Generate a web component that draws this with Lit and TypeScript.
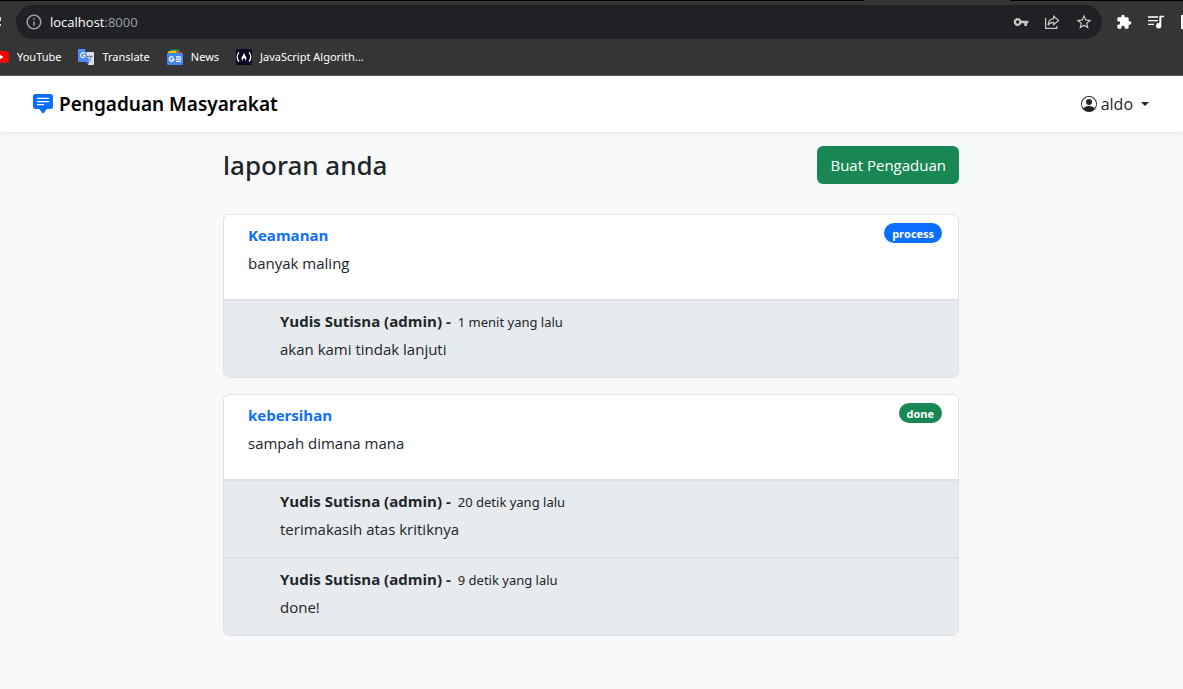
import { LitElement, html, css, svg } from "lit";
import { customElement, property } from "lit/decorators.js";

interface Reply {
  author: string;
  time: string;
  text: string;
}

interface Report {
  title: string;
  text: string;
  status: "process" | "done";
  replies: Reply[];
}

const reports: Report[] = [
  {
    title: "Keamanan",
    text: "banyak maling",
    status: "process",
    replies: [
      { author: "Yudis Sutisna (admin)", time: "1 menit yang lalu", text: "akan kami tindak lanjuti" },
    ],
  },
  {
    title: "kebersihan",
    text: "sampah dimana mana",
    status: "done",
    replies: [
      { author: "Yudis Sutisna (admin)", time: "20 detik yang lalu", text: "terimakasih atas kritiknya" },
      { author: "Yudis Sutisna (admin)", time: "9 detik yang lalu", text: "done!" },
    ],
  },
];

const icon = (size: number, box: number, body: unknown) =>
  html`<svg width=${size} height=${size} viewBox="0 0 ${box} ${box}" fill="currentColor" aria-hidden="true">${body}</svg>`;

const infoIcon = svg`<path d="M11 7h2v2h-2zm0 4h2v6h-2zm1-9C6.48 2 2 6.48 2 12s4.48 10 10 10 10-4.48 10-10S17.52 2 12 2zm0 18c-4.41 0-8-3.59-8-8s3.59-8 8-8 8 3.59 8 8-3.59 8-8 8z"/>`;
const keyIcon = svg`<path fill-rule="evenodd" d="M12.65 10A5.99 5.99 0 0 0 7 6c-3.31 0-6 2.69-6 6s2.69 6 6 6a5.99 5.99 0 0 0 5.65-4H17v4h4v-4h2v-4H12.65zM7 14.5a2.5 2.5 0 1 1 0-5 2.5 2.5 0 0 1 0 5z"/>`;
const shareIcon = svg`<path fill="none" stroke="currentColor" stroke-width="1.2" d="M1.6 4v10.400h11.2V12M9.600 2.200 14.600 6.400 9.600 10.600V8.300C6.800 8.200 5.200 9.200 4 11.200 4.300 7.500 6.200 5 9.600 4.600z"/>`;
const starIcon = svg`<path d="m22 9.240-7.190-.620L12 2 9.190 8.630 2 9.240l5.460 4.730L5.820 21 12 17.270 18.180 21l-1.630-7.030L22 9.240zM12 15.400l-3.760 2.270 1-4.280-3.320-2.880 4.380-.380L12 6.100l1.710 4.040 4.380.380-3.320 2.880 1 4.280L12 15.400z"/>`;
const puzzleIcon = svg`<path d="M20.500 11H19V7c0-1.100-.900-2-2-2h-4V3.500a2.500 2.500 0 0 0-5 0V5H4c-1.100 0-1.990.900-1.990 2v3.800H3.500c1.490 0 2.700 1.210 2.700 2.700s-1.210 2.700-2.700 2.700H2V20c0 1.100.900 2 2 2h3.800v-1.500c0-1.490 1.210-2.700 2.700-2.700s2.700 1.210 2.700 2.700V22H17c1.100 0 2-.900 2-2v-4h1.500a2.500 2.500 0 0 0 0-5z"/>`;
const musicIcon = svg`<path d="M0 3.500h15v2H0zM0 9h15v2H0zM0 14.500h9v2H0zM17 2.500h7v2.500h-4V17.500a4 4 0 1 1-3-3.800z"/>`;
const chatIcon = svg`<path d="M0 2a2 2 0 0 1 2-2h12a2 2 0 0 1 2 2v8a2 2 0 0 1-2 2h-2.500a1 1 0 0 0-.800.400l-1.900 2.533a1 1 0 0 1-1.600 0L5.300 12.400a1 1 0 0 0-.800-.400H2a2 2 0 0 1-2-2V2zm3.500 1a.500.500 0 0 0 0 1h9a.500.500 0 0 0 0-1h-9zm0 2.500a.500.500 0 0 0 0 1h9a.500.500 0 0 0 0-1h-9zm0 2.500a.500.500 0 0 0 0 1h5a.500.500 0 0 0 0-1h-5z"/>`;
const personIcon = svg`<path d="M11 6a3 3 0 1 1-6 0 3 3 0 0 1 6 0z"/><path fill-rule="evenodd" d="M0 8a8 8 0 1 1 16 0A8 8 0 0 1 0 8zm8-7a7 7 0 0 0-5.468 11.370C3.242 11.226 4.805 10 8 10s4.757 1.225 5.468 2.370A7 7 0 0 0 8 1z"/>`;

const youtubeIcon = svg`<rect y="2" width="16" height="12" rx="3" fill="#f00"/><path d="M6.500 5.500v5l4-2.500z" fill="#fff"/>`;
const translateIcon = svg`<path d="M6 3h9.300a.700.700 0 0 1 .700.700V15.300a.700.700 0 0 1-.700.700H10z" fill="#dcdfe3"/><path d="M9 7.500h5.500M11.800 6v1.500M13.300 7.500c-.500 2.300-2 3.700-3.300 4.700M10 9c.800 1.600 2 2.800 3.500 3.500" stroke="#6b7b8c" stroke-width=".9" fill="none"/><path d="M7.500 13H11l-1 3z" fill="#2a56c6"/><path d="M.700 0H7l4 13H.700A.700.700 0 0 1 0 12.300V.700A.700.700 0 0 1 .700 0z" fill="#4c8bf5"/><path d="M6.800 4.900A2.300 2.300 0 1 0 7.200 6.500H5" stroke="#fff" stroke-width="1.100" fill="none"/>`;
const newsIcon = svg`<path d="M3 .500h9.500V5H3z" fill="#1e9b55"/><path d="m8 2 7.500 1.500V6H7z" fill="#ea4335"/><path d="M1 2.500 9 1.500 10 6H1z" fill="#fbbc04"/><rect y="4" width="16" height="12" rx="1" fill="#4385f4"/><path d="M6.400 8.400A2.300 2.300 0 1 0 7 10.200H4.800" stroke="#fff" stroke-width="1.300" fill="none"/><path d="M9 7.300h5v1.200H9zM9 9.500h5.500v1.200H9zM9 11.700h5v1.200H9z" fill="#fff"/>`;
const campIcon = svg`<rect width="16" height="16" fill="#0a0a23"/><path d="M3 3.500C.600 6 .600 10 3 12.500M13 3.500c2.400 2.500 2.400 6.500 0 9" stroke="#fff" stroke-width="1.200" fill="none"/><path d="M7.300 3.500c1.500 1.200 1.200 2.300 2 3.200 1.700 2 1.400 4-.300 5.300.700-1.500 0-2.700-1-2.700s-1.700 1.200-1 2.700C5 10.800 5 8.700 6.400 7.200c1-1.100 1.300-2 .9-3.700z" fill="#fff"/>`;

@customElement("browser-bar")
export class BrowserBar extends LitElement {
  static styles = css`
    :host {
      display: block;
      background: #353535;
      border-bottom: 1px solid #5a5858;
      color: #fff;
      font: 11px/16px "Noto Sans", "Open Sans", sans-serif;
    }
    .tabs {
      height: 1px;
      background: linear-gradient(to right, #000 73%, #353535 73% 85.4%, #000 85.4%);
    }
    .toolbar {
      display: flex;
      align-items: center;
      padding-top: 4px;
      overflow: hidden;
    }
    .reload {
      width: 16px;
      flex: none;
    }
    .reload svg,
    .avatar svg {
      display: block;
    }
    .address {
      flex: 1;
      display: flex;
      align-items: center;
      height: 34px;
      padding: 0 9px;
      border-radius: 17px;
      background: #202124;
      color: #9aa0a6;
    }
    .url {
      flex: 1;
      margin-left: 7px;
      font: 13px/18px "Open Sans", "Noto Sans", sans-serif;
    }
    .host {
      color: #fff;
    }
    .actions {
      display: flex;
      align-items: center;
      gap: 15px;
      color: #c8c8c8;
    }
    .extras {
      display: flex;
      align-items: center;
      gap: 16px;
      padding-left: 14px;
    }
    button {
      display: flex;
      padding: 0;
      border: 0;
      background: none;
      color: inherit;
    }
    .bookmarks {
      display: flex;
      height: 36px;
      align-items: center;
      gap: 17px;
      overflow: hidden;
    }
    .bookmark {
      display: flex;
      align-items: center;
      gap: 8px;
      color: inherit;
      text-decoration: none;
      white-space: nowrap;
    }
    .bookmark:first-child {
      margin-left: -7px;
    }
  `;

  render() {
    return html`
      <div class="tabs"></div>
      <div class="toolbar">
        <div class="reload">
          <svg width="2" height="12" viewBox="0 0 2 12" fill="#ddd" aria-hidden="true"><path d="M0 1h1v4H0zM0 8h1v2H0z" /></svg>
        </div>
        <div class="address">
          ${icon(18, 24, infoIcon)}
          <span class="url"><span class="host">localhost</span>:8000</span>
          <div class="actions">
            <button aria-label="Passwords">${icon(16, 24, keyIcon)}</button>
            <button aria-label="Share">${icon(16, 16, shareIcon)}</button>
            <button aria-label="Bookmark">${icon(18, 24, starIcon)}</button>
          </div>
        </div>
        <div class="extras">
          <button aria-label="Extensions">${icon(16, 24, puzzleIcon)}</button>
          <button aria-label="Media">${icon(16, 24, musicIcon)}</button>
          <span class="avatar"><svg width="3" height="14" fill="#fff" aria-hidden="true"><rect x="1" width="2" height="14" /></svg></span>
        </div>
      </div>
      <nav class="bookmarks">
        <a class="bookmark" href="#">${icon(16, 16, youtubeIcon)}YouTube</a>
        <a class="bookmark" href="#">${icon(16, 16, translateIcon)}Translate</a>
        <a class="bookmark" href="#">${icon(16, 16, newsIcon)}News</a>
        <a class="bookmark" href="#">${icon(16, 16, campIcon)}JavaScript Algorith...</a>
      </nav>
    `;
  }
}

@customElement("report-card")
export class ReportCard extends LitElement {
  @property({ attribute: false }) report!: Report;

  static styles = css`
    :host {
      display: block;
      border: 1px solid #dee2e6;
      border-radius: 6px;
      background: #fff;
      overflow: hidden;
    }
    .report {
      display: flex;
      justify-content: space-between;
      align-items: flex-start;
      padding: 8px 16px 24px 24px;
      border-bottom: 1px solid #dee2e6;
    }
    .title {
      color: #0d6efd;
      font-weight: 700;
      text-decoration: none;
    }
    .text {
      margin: 4px 0 0;
    }
    .badge {
      padding: 1px 8px 0;
      border-radius: 10px;
      color: #fff;
      font-size: 11px;
      line-height: 19px;
      font-weight: 700;
    }
    .process {
      background: #0d6efd;
    }
    .done {
      background: #198754;
    }
    .reply {
      padding: 8px 16px 16px 56px;
      border-top: 1px solid #dee2e6;
      background: #e7ebee;
    }
    .reply + .reply {
      border-top-width: 2px;
    }
    .meta {
      display: flex;
      align-items: baseline;
      gap: 7px;
      height: 24px;
    }
    .time {
      font: 13px/20px "Noto Sans", "Open Sans", sans-serif;
    }
  `;

  render() {
    const { title, text, status, replies } = this.report;
    return html`
      <article>
        <div class="report">
          <div>
            <a class="title" href="#">${title}</a>
            <p class="text">${text}</p>
          </div>
          <span class="badge ${status}">${status}</span>
        </div>
        ${replies.map(
          (r) => html`<div class="reply">
            <div class="meta"><strong>${r.author} -</strong><span class="time">${r.time}</span></div>
            <p class="text">${r.text}</p>
          </div>`
        )}
      </article>
    `;
  }
}

@customElement("app-root")
export class AppRoot extends LitElement {
  static styles = css`
    :host {
      display: block;
      min-height: 100vh;
      background: #f8f9fb;
      color: #212529;
      font: 15px/24px "Open Sans", "Noto Sans", sans-serif;
    }
    .navbar {
      display: flex;
      align-items: center;
      justify-content: space-between;
      height: 56px;
      padding: 0 34px 0 33px;
      background: #fff;
      box-shadow: 0 2px 4px rgba(0, 0, 0, 0.075);
    }
    .brand {
      display: flex;
      align-items: center;
      gap: 6px;
      color: #000;
      font: 600 19px/30px "Noto Sans", "Open Sans", sans-serif;
      text-decoration: none;
    }
    .brand svg {
      color: #0d6efd;
    }
    .user {
      display: flex;
      align-items: center;
      gap: 4px;
      padding: 0;
      border: 0;
      background: none;
      color: inherit;
      font: inherit;
      font-size: 16px;
    }
    .caret {
      margin-left: 4px;
      border: 4px solid transparent;
      border-top-color: currentColor;
      border-bottom: 0;
    }
    .content {
      box-sizing: border-box;
      max-width: 761px;
      margin: 0 auto;
      padding: 14px 13px 14px 12px;
    }
    .heading {
      display: flex;
      align-items: center;
      justify-content: space-between;
      margin-bottom: 30px;
    }
    h1 {
      margin: 0;
      font: 500 26px/34px "Noto Sans", "Open Sans", sans-serif;
    }
    .create {
      height: 38px;
      padding: 0 13px;
      border: 0;
      border-radius: 6px;
      background: #198754;
      color: #fff;
      font: inherit;
    }
    .list {
      display: grid;
      gap: 16px;
    }
  `;

  render() {
    return html`
      <browser-bar></browser-bar>
      <header class="navbar">
        <a class="brand" href="#">${icon(20, 16, chatIcon)}Pengaduan Masyarakat</a>
        <button class="user">${icon(16, 16, personIcon)}aldo <span class="caret"></span></button>
      </header>
      <main class="content">
        <div class="heading">
          <h1>laporan anda</h1>
          <button class="create">Buat Pengaduan</button>
        </div>
        <div class="list">${reports.map((r) => html`<report-card .report=${r}></report-card>`)}</div>
      </main>
    `;
  }
}
